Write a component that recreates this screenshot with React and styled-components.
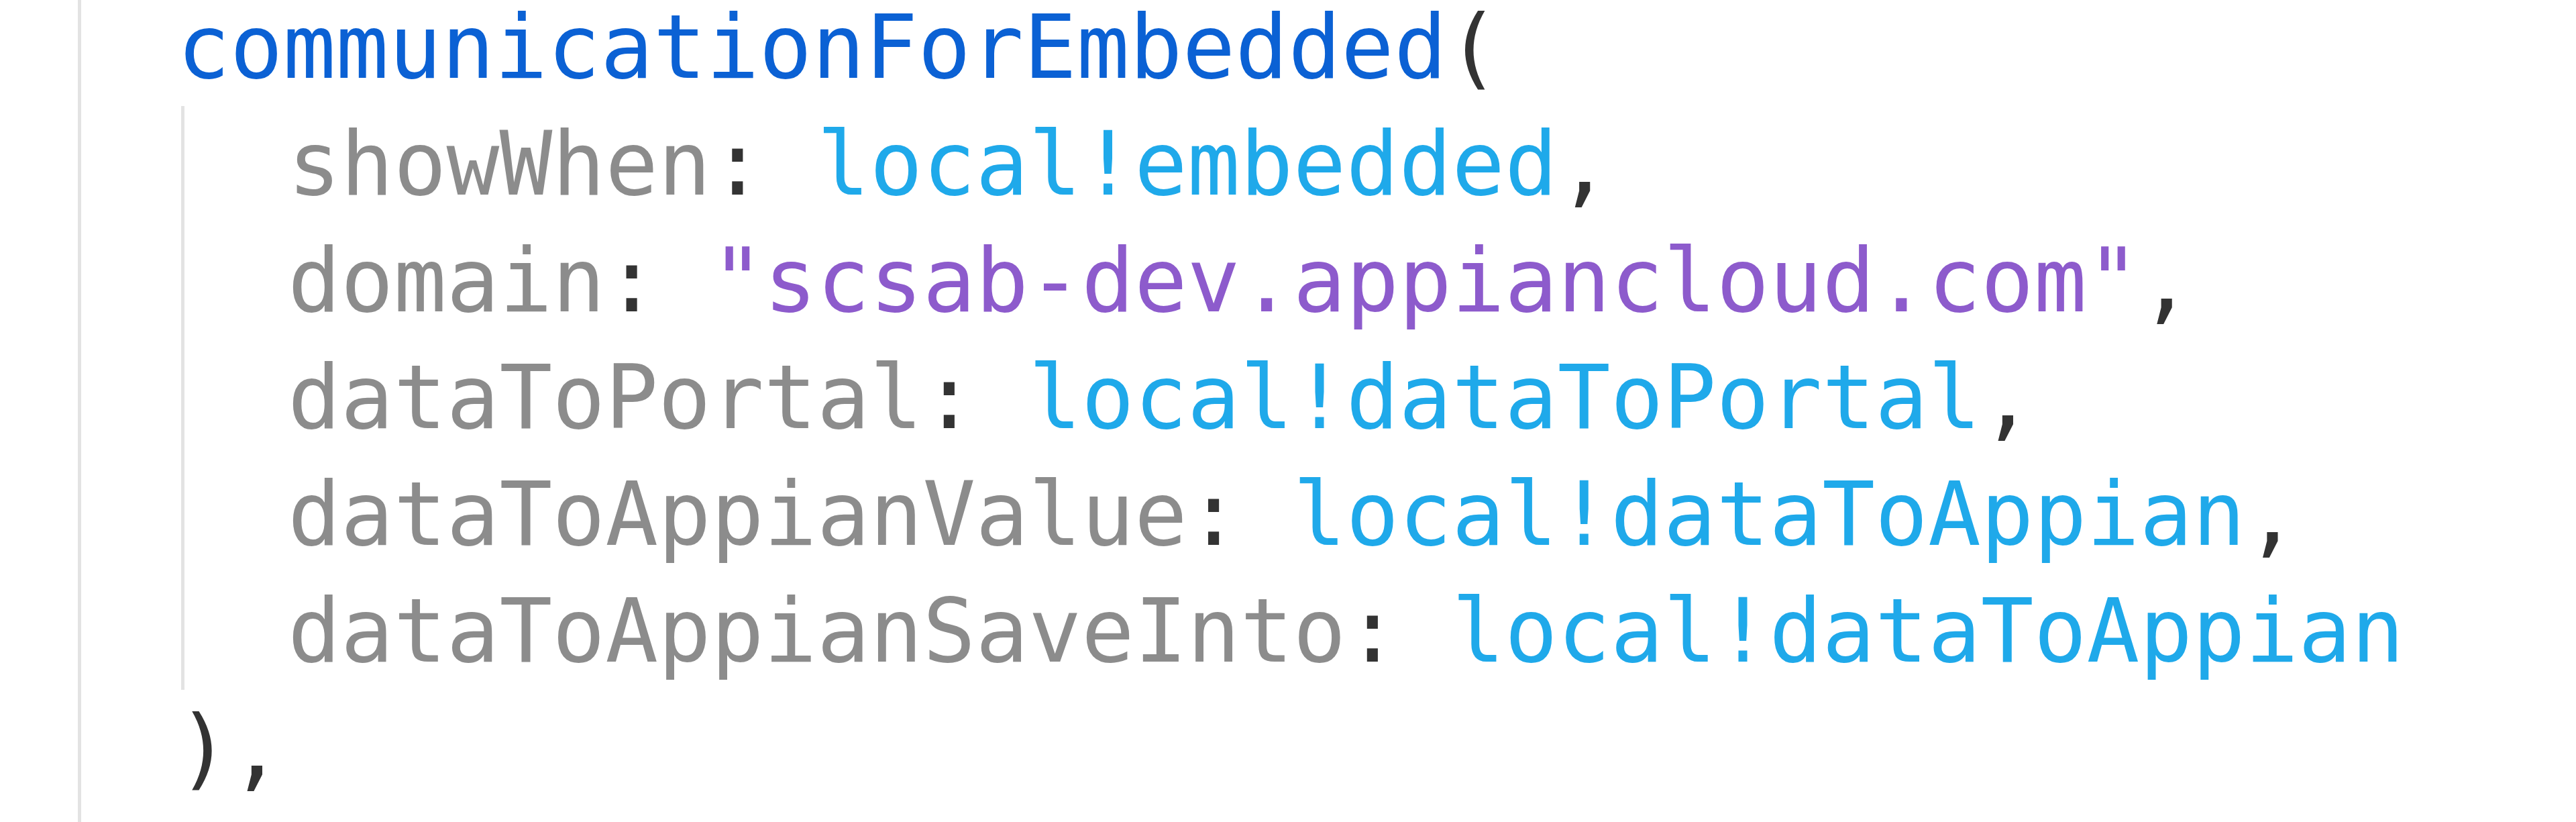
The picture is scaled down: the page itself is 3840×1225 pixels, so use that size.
import styled, { createGlobalStyle } from "styled-components";

const GlobalStyle = createGlobalStyle`
  html, body {
    margin: 0;
    padding: 0;
    background: #ffffff;
  }
  body {
    font-family: "DejaVu Sans Mono", "Liberation Mono", monospace;
  }
`;

const Page = styled.div`
  width: 3840px;
  height: 1225px;
  overflow: hidden;
  background: #ffffff;
  padding-left: 116px;
  box-sizing: border-box;
`;

const Editor = styled.div`
  height: 100%;
  border-left: 5px solid #e3e3e3;
  padding-left: 143px;
  box-sizing: border-box;
  font-family: "DejaVu Sans Mono", "Liberation Mono", monospace;
  font-size: 131px;
  line-height: 174px;
  color: #333333;
`;

const Line = styled.div`
  white-space: pre;
  line-height: ${(p) => (p.$first ? "142px" : "174px")};
`;

const Indent = styled.div`
  margin-top: 16px;
  margin-left: 6px;
  border-left: 5px solid #e3e3e3;
  padding-left: 154px;
`;

const Fn = styled.span`
  color: #0b61d4;
`;

const Key = styled.span`
  color: #8c8c8c;
`;

const Local = styled.span`
  color: #1fa9ea;
`;

const Str = styled.span`
  color: #8d5bcc;
`;

const Punct = styled.span`
  color: #333333;
`;

const params = [
  { key: "showWhen", value: "local!embedded", kind: "local", comma: true },
  { key: "domain", value: "\"scsab-dev.appiancloud.com\"", kind: "string", comma: true },
  { key: "dataToPortal", value: "local!dataToPortal", kind: "local", comma: true },
  { key: "dataToAppianValue", value: "local!dataToAppian", kind: "local", comma: true },
  { key: "dataToAppianSaveInto", value: "local!dataToAppian", kind: "local", comma: false },
];

function App() {
  return (
    <>
      <GlobalStyle />
      <Page>
        <Editor>
          <Line $first>
            <Fn>communicationForEmbedded</Fn>
            <Punct>(</Punct>
          </Line>
          <Indent>
            {params.map((p) => (
              <Line key={p.key}>
                <Key>{p.key}</Key>
                <Punct>: </Punct>
                {p.kind === "string" ? <Str>{p.value}</Str> : <Local>{p.value}</Local>}
                {p.comma && <Punct>,</Punct>}
              </Line>
            ))}
          </Indent>
          <Line>
            <Punct>),</Punct>
          </Line>
        </Editor>
      </Page>
    </>
  );
}

export default App;
